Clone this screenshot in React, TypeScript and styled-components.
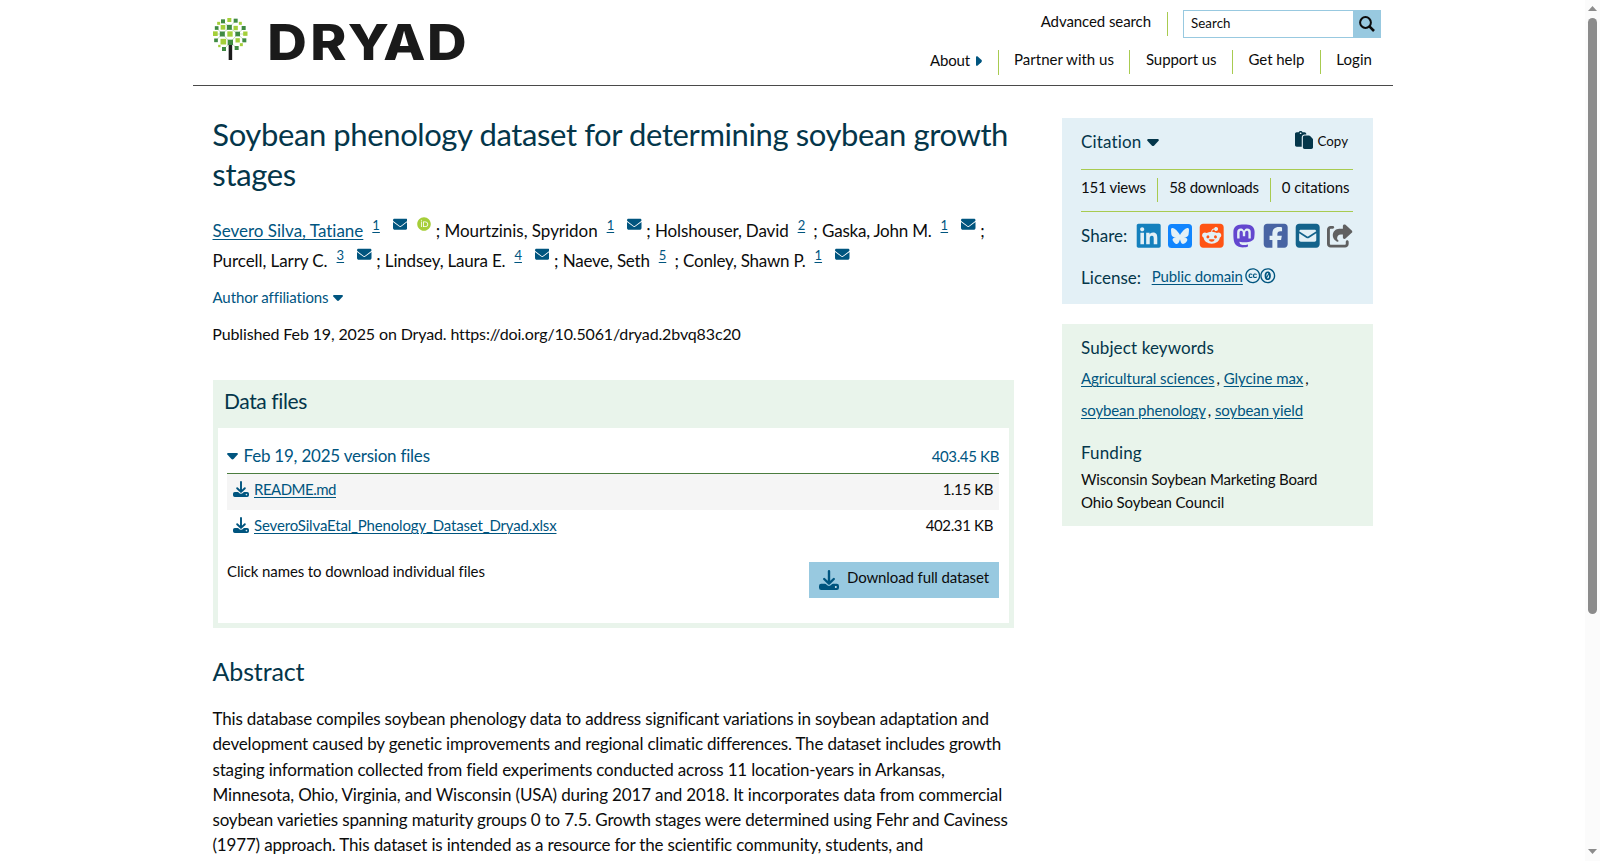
import React from 'react';
import styled, { createGlobalStyle } from 'styled-components';
import {
  FaEnvelope,
  FaOrcid,
  FaPaste,
  FaLinkedin,
  FaBluesky,
  FaSquareReddit,
  FaMastodon,
  FaSquareFacebook,
  FaSquareEnvelope,
  FaShareFromSquare,
  FaCreativeCommons,
  FaCreativeCommonsZero,
} from 'react-icons/fa6';

const color = {
  ink: '#0c0c0c',
  heading: '#04364a',
  link: '#00557f',
  lime: '#a8cb50',
  sky: '#98c9e0',
  paleBlue: '#e3f0f6',
  paleGreen: '#e9f4eb',
};

const Global = createGlobalStyle`
  * { box-sizing: border-box; }
  html, body { margin: 0; height: 100%; overflow: hidden; background: #fff; }
  body {
    font-family: Lato, 'Open Sans', sans-serif;
    font-size: 15px;
    color: ${color.ink};
    font-variant-ligatures: none;
  }
  h1, h2, h3, p { margin: 0; font-weight: 400; }
  svg { display: block; flex: none; }
`;

const Window = styled.div`
  display: flex;
  height: 861px;
  overflow: hidden;
`;

const Viewport = styled.div`
  flex: 1;
  min-width: 0;
  overflow: hidden;
`;

const Container = styled.div`
  width: 1200px;
  margin-left: 193px;
`;

/* letter spacing, in px, for one run of text */
const Run = styled.span<{ $t?: number }>`
  white-space: pre;
  letter-spacing: ${(p) => p.$t ?? -0.14}px;
`;

const Link = styled(Run).attrs({ as: 'a' })`
  color: ${color.link};
  text-decoration: underline;
  text-decoration-thickness: 1px;
  text-underline-offset: 2px;
`;

/* ---------- header ---------- */

const Header = styled.header`
  display: flex;
  justify-content: space-between;
  height: 86px;
  border-bottom: 1px solid #4a4a4a;
  padding: 10px 12px 0 20px;
`;

const Brand = styled.div`
  display: flex;
  gap: 15px;
  padding-top: 8px;
`;

const HeaderNav = styled.div`
  display: flex;
  flex-direction: column;
  align-items: flex-end;
  gap: 12px;
`;

const SearchRow = styled.div`
  display: flex;
`;

const Advanced = styled.div`
  height: 24px;
  margin: 2px 15px 0 0;
  padding-right: 16px;
  border-right: 1px solid ${color.lime};
  line-height: 18px;
`;

const SearchBox = styled.div`
  display: flex;
  width: 198px;
  height: 28px;
  border: 1px solid ${color.sky};
  font-size: 13.3px;
  line-height: 25px;
  padding-left: 7px;
  justify-content: space-between;
`;

const SearchButton = styled.div`
  display: flex;
  align-items: center;
  justify-content: center;
  width: 27px;
  background: ${color.sky};
`;

const NavRow = styled.nav`
  display: flex;
  padding-right: 9px;
`;

const NavItem = styled.div<{ $tall?: boolean }>`
  display: flex;
  gap: 6px;
  height: ${(p) => (p.$tall ? 25 : 24)}px;
  line-height: ${(p) => (p.$tall ? 20 : 18)}px;
  padding: 0 15.5px;
  border-right: 1px solid ${color.lime};
  &:last-child { border-right: 0; padding-right: 0; }
  svg { margin-top: 6px; }
`;

/* ---------- main column ---------- */

const Columns = styled.div`
  display: flex;
  align-items: flex-start;
  padding-left: 20px;
`;

const Main = styled.main`
  width: 801px;
  padding-top: 28px;
`;

const Title = styled.h1`
  margin-left: -0.7px;
  font-size: 31px;
  line-height: 40px;
  color: ${color.heading};
  display: flex;
  flex-direction: column;
`;

const AuthorList = styled.div`
  margin: 21px 0 0 -0.5px;
  font-size: 17px;
  line-height: 32px;
`;

const AuthorLine = styled.div`
  display: flex;
  height: 30px;
`;

const Affiliation = styled.a`
  width: 7.5px;
  margin: 0 0 0 9px;
  font-size: 13px;
  line-height: 20px;
  color: ${color.link};
  text-decoration: underline;
  text-underline-offset: 2px;
`;

const AuthorIcon = styled.span<{ $gap: number; $color: string }>`
  margin: 2.4px 0 0 ${(p) => p.$gap}px;
  color: ${(p) => p.$color};
`;

const Separator = styled.span<{ $wide: boolean }>`
  width: 8.7px;
  margin-left: ${(p) => (p.$wide ? 8.2 : 4.6)}px;
`;

const Disclosure = styled.div`
  display: flex;
  align-items: center;
  gap: 5px;
  margin: 12px 0 0 -0.5px;
  line-height: 20px;
  color: ${color.link};
  svg { margin-top: 1px; }
`;

const Published = styled.p`
  margin: 17px 0 0 -0.7px;
  font-size: 16px;
  line-height: 20px;
`;

const FilesPanel = styled.section`
  margin-top: 36px;
  height: 248px;
  padding: 0 5px 5px;
  background: ${color.paleGreen};
`;

const FilesHeading = styled.h2`
  height: 48px;
  padding-left: 6px;
  font-size: 21px;
  line-height: 42px;
  color: ${color.heading};
`;

const FilesBody = styled.div`
  height: 195px;
  padding: 0 10px 0 9px;
  background: #fff;
`;

const VersionRow = styled.div`
  display: flex;
  align-items: baseline;
  height: 46px;
  padding-top: 14px;
  line-height: 27px;
  font-size: 17px;
  color: ${color.link};
  border-bottom: 1px solid #4b7d3f;
  svg { margin-right: 5.5px; align-self: flex-start; margin-top: 11px; }
`;

const Size = styled.span`
  margin-left: auto;
  font-size: 15px;
`;

const FileRow = styled.div<{ $shaded?: boolean }>`
  display: flex;
  gap: 5px;
  height: 36px;
  padding: 0 6px;
  line-height: 31px;
  background: ${(p) => (p.$shaded ? '#f5f5f5' : '#fff')};
  svg { margin-top: 7px; }
`;

const FilesFooter = styled.div`
  display: flex;
  justify-content: space-between;
  margin-top: 16px;
  line-height: 18px;
`;

const DownloadButton = styled.div`
  display: flex;
  gap: 8px;
  width: 190px;
  height: 36px;
  padding-left: 10px;
  line-height: 30px;
  background: ${color.sky};
  svg { margin-top: 8px; }
`;

const AbstractHeading = styled.h2`
  margin: 28px 0 0 -0.5px;
  font-size: 25px;
  line-height: 30px;
  color: ${color.heading};
`;

const AbstractText = styled.p`
  display: flex;
  flex-direction: column;
  margin: 20.1px 0 0 -0.5px;
  font-size: 17px;
  line-height: 25.2px;
`;

/* ---------- sidebar ---------- */

const Sidebar = styled.aside`
  display: flex;
  flex-direction: column;
  gap: 20px;
  width: 311px;
  margin: 32px 0 0 48px;
`;

const Card = styled.section<{ $bg: string; $h: number }>`
  height: ${(p) => p.$h}px;
  padding: 0 20px 0 19px;
  background: ${(p) => p.$bg};
`;

const CitationRow = styled.div`
  display: flex;
  height: 52px;
  border-bottom: 1px solid ${color.lime};
  font-size: 17px;
  line-height: 47px;
  color: ${color.heading};
`;

const CitationCaret = styled.span`
  margin: 21px 0 0 6px;
`;

const CopyButton = styled.div`
  display: flex;
  gap: 4.5px;
  margin-left: auto;
  padding-right: 5px;
  font-size: 13.3px;
  line-height: 46px;
  color: ${color.ink};
  svg { margin-top: 13px; color: ${color.heading}; }
`;

const Stats = styled.div`
  display: flex;
  height: 42px;
  padding-top: 8px;
  line-height: 18px;
  border-bottom: 1px solid ${color.lime};
`;

const Stat = styled.div`
  height: 24px;
  padding: 0 11px;
  border-right: 1px solid ${color.lime};
  &:first-child { padding: 0 11.5px 0 0; }
  &:last-child { border: 0; padding-right: 0; }
`;

const ShareRow = styled.div`
  display: flex;
  align-items: flex-start;
  justify-content: space-between;
  height: 24px;
  margin-top: 12px;
  font-size: 17px;
  line-height: 23px;
  color: ${color.heading};
`;

const ShareIcons = styled.div`
  display: flex;
  gap: 7.8px;
`;

const ShareIcon = styled.span<{ $color: string; $w?: number }>`
  display: flex;
  align-items: center;
  justify-content: center;
  width: ${(p) => p.$w ?? 24}px;
  height: 24px;
  color: ${(p) => p.$color};
`;

const BlueskyTile = styled.span`
  display: flex;
  align-items: center;
  justify-content: center;
  width: 24px;
  height: 24px;
  border-radius: 3.5px;
  background: #1185fe;
  color: ${color.paleBlue};
`;

const LicenseRow = styled.div`
  display: flex;
  margin-top: 17px;
  font-size: 17px;
  line-height: 26px;
  color: ${color.heading};
`;

const LicenseValue = styled.div`
  display: flex;
  margin-left: 10.5px;
  font-size: 15px;
  line-height: 22px;
  color: ${color.link};
  svg { margin-top: 3px; }
  svg:first-of-type { margin-left: 2px; }
`;

const CardHeading = styled.h3<{ $top: number }>`
  padding-top: ${(p) => p.$top}px;
  font-size: 17px;
  line-height: 23px;
  color: ${color.heading};
`;

const Keywords = styled.div`
  margin: 3px 0 1px;
  line-height: 32px;
`;

const KeywordLine = styled.div`
  display: flex;
`;

const Comma = styled.span`
  width: 9.2px;
  padding-left: 2px;
`;

const Funders = styled.div`
  display: flex;
  flex-direction: column;
  margin-top: 4px;
  line-height: 23px;
`;

/* ---------- scrollbar ---------- */

const Scrollbar = styled.div`
  display: flex;
  flex-direction: column;
  align-items: center;
  width: 15px;
  padding: 6px 0 7px;
  background: #fbfbfb;
`;

const Thumb = styled.div`
  width: 9px;
  height: 596px;
  margin: 7px 0 auto;
  border-radius: 5px;
  background: #8b8b8b;
`;

/* ---------- drawings ---------- */

const L = '#a4cf3a';
const D = '#3f8a42';
const leaves: [number, number, number, string][] = [
  [118, 60, 12, L], [99, 64, 12, D], [137, 62, 12, D], [86, 70, 9, L], [151, 70, 9, L],
  [80, 84, 11, D], [99, 82, 14, L], [118, 82, 15, D], [137, 84, 13, L], [161, 84, 12, D],
  [76, 101, 14, L], [97, 102, 15, D], [120, 102, 16, L], [143, 102, 14, D], [166, 101, 13, L],
  [78, 121, 11, D], [100, 125, 17, L], [121, 127, 16, D], [143, 121, 13, L], [163, 121, 12, D],
  [88, 138, 7, L], [154, 134, 9, L], [102, 147, 12, D], [140, 144, 12, D],
];

const Tree = () => (
  <svg width="35" height="42" viewBox="69 54 105 126">
    <path
      d="M121 127 97 102 80 84M97 102 118 82 99 64M121 127 143 102 161 84M143 102 118 82 137 62M121 127 102 147M121 127 140 144M97 102H76M143 102H166M97 102 78 121M143 102 163 121"
      stroke="#8fc08a"
      strokeWidth="1.6"
      fill="none"
    />
    <rect x="116" y="130" width="10.5" height="50" fill="#1a1a1a" />
    {leaves.map(([x, y, s, c]) => (
      <rect key={`${x}-${y}`} x={x - s / 2} y={y - s / 2} width={s} height={s} fill={c} />
    ))}
  </svg>
);

const WordmarkSvg = styled.svg`
  margin-top: -8px;
  overflow: visible;
`;

const wordmarkLetters: [string, number][] = [['D', 4.3], ['R', 47.3], ['Y', 84.8], ['A', 120.2], ['D', 164]];

const Wordmark = () => (
  <WordmarkSvg width="214" height="66" viewBox="0 -8 214 66">
    {wordmarkLetters.map(([letter, x]) => (
      <text
        key={x}
        transform={`translate(${x} 41.7) scale(1.12 1)`}
        fontFamily="Inter, sans-serif"
        fontWeight="800"
        fontSize="49"
        fill="#1a1a1a"
      >
        {letter}
      </text>
    ))}
  </WordmarkSvg>
);

const Caret = ({ w = 10 }: { w?: number }) => (
  <svg width={w} height={w * 0.6} viewBox="0 0 10 6">
    <path d="M.8 0h8.4q1 .4.5 1.4L6.2 5.3q-1.2 1.2-2.4 0L.3 1.4Q-.2.4.8 0z" fill="currentColor" />
  </svg>
);

const SideCaret = () => (
  <svg width="6" height="10" viewBox="0 0 6 10">
    <path d="M0 .8Q.4-.2 1.4.3L5.3 3.8q1.2 1.2 0 2.4L1.4 9.7Q.4 10.2 0 9.2z" fill={color.link} />
  </svg>
);

const SearchGlyph = () => (
  <svg width="16" height="16" viewBox="0 0 16 16" fill="none" stroke="#0c0c0c">
    <circle cx="6.5" cy="6.5" r="5.4" strokeWidth="2" />
    <path d="M10.4 10.4 15 15" strokeWidth="2.6" />
  </svg>
);

const DownloadGlyph = ({ s }: { s: number }) => (
  <svg width={s} height={s} viewBox="0 0 20 20" fill="none">
    <path
      d="M2.2 13.7h3.6c1.6 0 2 2.2 4.2 2.2s2.6-2.2 4.2-2.2h3.6a2.2 2.2 0 0 1 2.2 2.2v1.9a2.2 2.2 0 0 1-2.2 2.2H2.2A2.2 2.2 0 0 1 0 17.8v-1.9a2.2 2.2 0 0 1 2.2-2.2z"
      fill={color.link}
    />
    <circle cx="16.8" cy="17" r="1" fill="#d7e9f2" />
    <path
      d="M10 1.2V13M5.2 9 10 13.6 14.8 9"
      stroke={color.link}
      strokeWidth="2.4"
      strokeLinecap="round"
      strokeLinejoin="round"
    />
  </svg>
);

const ScrollArrow = ({ down }: { down?: boolean }) => (
  <svg width="9" height="5" viewBox="0 0 9 5">
    <path d={down ? 'M0 0h9L4.5 5z' : 'M0 5h9L4.5 0z'} fill="#8b8b8b" />
  </svg>
);

/* ---------- content ---------- */

type AuthorData = { name: string; t: number; aff: string; mail?: boolean; orcid?: boolean; linked?: boolean };

const authorLines: AuthorData[][] = [
  [
    { name: 'Severo Silva, Tatiane', t: 0, aff: '1', mail: true, orcid: true, linked: true },
    { name: 'Mourtzinis, Spyridon', t: -0.03, aff: '1', mail: true },
    { name: 'Holshouser, David', t: -0.12, aff: '2' },
    { name: 'Gaska, John M.', t: -0.22, aff: '1', mail: true },
  ],
  [
    { name: 'Purcell, Larry C.', t: -0.07, aff: '3', mail: true },
    { name: 'Lindsey, Laura E.', t: -0.18, aff: '4', mail: true },
    { name: 'Naeve, Seth', t: -0.21, aff: '5' },
    { name: 'Conley, Shawn P.', t: -0.23, aff: '1', mail: true },
  ],
];

const Author = ({ a, last }: { a: AuthorData; last: boolean }) => (
  <>
    {a.linked ? <Link $t={a.t}>{a.name}</Link> : <Run $t={a.t}>{a.name}</Run>}
    <Affiliation>{a.aff}</Affiliation>
    {a.mail && (
      <AuthorIcon $gap={13} $color={color.link}>
        <FaEnvelope size={14.5} />
      </AuthorIcon>
    )}
    {a.orcid && (
      <AuthorIcon $gap={9.8} $color="#a6ce39">
        <FaOrcid size={14} />
      </AuthorIcon>
    )}
    {!last && <Separator $wide={!a.mail}>;</Separator>}
  </>
);

const abstractLines: [string, number][] = [
  ['This database compiles soybean phenology data to address significant variations in soybean adaptation and', -0.178],
  ['development caused by genetic improvements and regional climatic differences. The dataset includes growth', -0.175],
  ['staging information collected from field experiments conducted across 11 location-years in Arkansas,', -0.172],
  ['Minnesota, Ohio, Virginia, and Wisconsin (USA) during 2017 and 2018. It incorporates data from commercial', -0.149],
  ['soybean varieties spanning maturity groups 0 to 7.5. Growth stages were determined using Fehr and Caviness', -0.18],
  ['(1977) approach. This dataset is intended as a resource for the scientific community, students, and', -0.172],
];

const PageHeader = () => (
  <Header>
    <Brand>
      <Tree />
      <Wordmark />
    </Brand>
    <HeaderNav>
      <SearchRow>
        <Advanced><Run $t={-0.08}>Advanced search</Run></Advanced>
        <SearchBox>
          <Run $t={0.08}>Search</Run>
          <SearchButton><SearchGlyph /></SearchButton>
        </SearchBox>
      </SearchRow>
      <NavRow>
        <NavItem $tall>
          <Run $t={-0.12}>About</Run>
          <SideCaret />
        </NavItem>
        <NavItem><Run $t={0}>Partner with us</Run></NavItem>
        <NavItem><Run $t={-0.06}>Support us</Run></NavItem>
        <NavItem><Run $t={-0.05}>Get help</Run></NavItem>
        <NavItem><Run $t={0.05}>Login</Run></NavItem>
      </NavRow>
    </HeaderNav>
  </Header>
);

const DataFiles = () => (
  <FilesPanel>
    <FilesHeading><Run $t={-0.4}>Data files</Run></FilesHeading>
    <FilesBody>
      <VersionRow>
        <Caret w={11} />
        <Run $t={-0.22}>Feb 19, 2025 version files</Run>
        <Size><Run $t={-0.35}>403.45 KB</Run></Size>
      </VersionRow>
      <FileRow $shaded>
        <DownloadGlyph s={16} />
        <Link $t={-0.5}>README.md</Link>
        <Size><Run $t={-0.4}>1.15 KB</Run></Size>
      </FileRow>
      <FileRow>
        <DownloadGlyph s={16} />
        <Link $t={-0.163}>SeveroSilvaEtal_Phenology_Dataset_Dryad.xlsx</Link>
        <Size><Run $t={-0.35}>402.31 KB</Run></Size>
      </FileRow>
      <FilesFooter>
        <Run $t={-0.113}>Click names to download individual files</Run>
        <DownloadButton>
          <DownloadGlyph s={20} />
          <Run $t={-0.12}>Download full dataset</Run>
        </DownloadButton>
      </FilesFooter>
    </FilesBody>
  </FilesPanel>
);

const CitationCard = () => (
  <Card $bg={color.paleBlue} $h={186}>
    <CitationRow>
      <Run $t={0.15}>Citation</Run>
      <CitationCaret><Caret w={12} /></CitationCaret>
      <CopyButton>
        <FaPaste size={18} />
        <Run $t={0}>Copy</Run>
      </CopyButton>
    </CitationRow>
    <Stats>
      <Stat><Run $t={-0.26}>151 views</Run></Stat>
      <Stat><Run $t={-0.25}>58 downloads</Run></Stat>
      <Stat><Run $t={-0.06}>0 citations</Run></Stat>
    </Stats>
    <ShareRow>
      <Run $t={0.05}>Share:</Run>
      <ShareIcons>
        <ShareIcon $color="#1480bd"><FaLinkedin size={27.4} /></ShareIcon>
        <BlueskyTile><FaBluesky size={18} /></BlueskyTile>
        <ShareIcon $color="#ff5414"><FaSquareReddit size={27.4} /></ShareIcon>
        <ShareIcon $color="#6347cf"><FaMastodon size={26} /></ShareIcon>
        <ShareIcon $color="#4864a3"><FaSquareFacebook size={27.4} /></ShareIcon>
        <ShareIcon $color="#14638b"><FaSquareEnvelope size={27.4} /></ShareIcon>
        <ShareIcon $color="#606060" $w={26}><FaShareFromSquare size={26} /></ShareIcon>
      </ShareIcons>
    </ShareRow>
    <LicenseRow>
      <Run $t={0.04}>License:</Run>
      <LicenseValue>
        <Link $t={-0.1}>Public domain</Link>
        <FaCreativeCommons size={15.5} />
        <FaCreativeCommonsZero size={15.5} />
      </LicenseValue>
    </LicenseRow>
  </Card>
);

const KeywordCard = () => (
  <Card $bg={color.paleGreen} $h={202}>
    <CardHeading $top={12}><Run $t={0.12}>Subject keywords</Run></CardHeading>
    <Keywords>
      <KeywordLine>
        <Link $t={-0.07}>Agricultural sciences</Link>
        <Comma>,</Comma>
        <Link $t={-0.05}>Glycine max</Link>
        <Comma>,</Comma>
      </KeywordLine>
      <KeywordLine>
        <Link $t={-0.17}>soybean phenology</Link>
        <Comma>,</Comma>
        <Link $t={-0.08}>soybean yield</Link>
      </KeywordLine>
    </Keywords>
    <CardHeading $top={14}><Run $t={0.12}>Funding</Run></CardHeading>
    <Funders>
      <Run $t={-0.16}>Wisconsin Soybean Marketing Board</Run>
      <Run $t={-0.13}>Ohio Soybean Council</Run>
    </Funders>
  </Card>
);

export default function App() {
  return (
    <Window>
      <Global />
      <Viewport>
        <Container>
          <PageHeader />
          <Columns>
            <Main>
              <Title>
                <Run $t={-0.39}>Soybean phenology dataset for determining soybean growth</Run>
                <Run $t={-0.35}>stages</Run>
              </Title>
              <AuthorList>
                {authorLines.map((line, i) => (
                  <AuthorLine key={i}>
                    {line.map((a, j) => (
                      <Author key={a.name} a={a} last={i === 1 && j === line.length - 1} />
                    ))}
                  </AuthorLine>
                ))}
              </AuthorList>
              <Disclosure>
                <Run $t={-0.1}>Author affiliations</Run>
                <Caret />
              </Disclosure>
              <Published>
                <Run $t={-0.135}>Published Feb 19, 2025 on Dryad. https://doi.org/10.5061/dryad.2bvq83c20</Run>
              </Published>
              <DataFiles />
              <AbstractHeading><Run $t={-0.12}>Abstract</Run></AbstractHeading>
              <AbstractText>
                {abstractLines.map(([text, t]) => (
                  <Run key={text} $t={t}>{text}</Run>
                ))}
              </AbstractText>
            </Main>
            <Sidebar>
              <CitationCard />
              <KeywordCard />
            </Sidebar>
          </Columns>
        </Container>
      </Viewport>
      <Scrollbar>
        <ScrollArrow />
        <Thumb />
        <ScrollArrow down />
      </Scrollbar>
    </Window>
  );
}
